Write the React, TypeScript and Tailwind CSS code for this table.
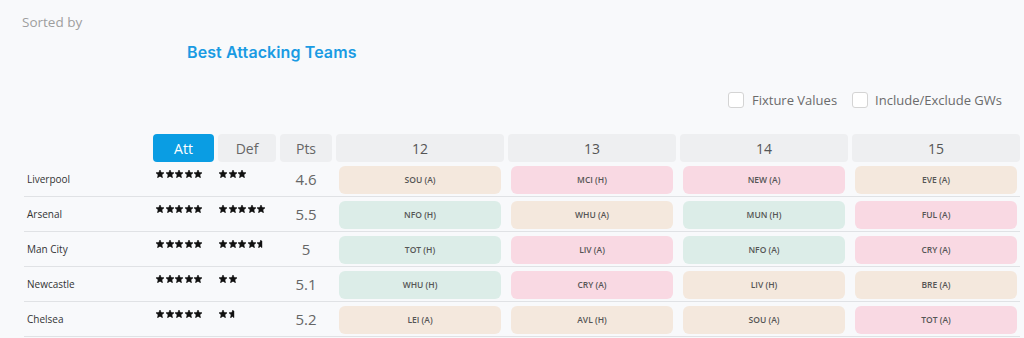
import React from "react";

type Fx = { t: string; c: "b" | "p" | "g" };
type Row = { name: string; att: number; def: number; pts: string; fx: Fx[] };

const rows: Row[] = [
  { name: "Liverpool", att: 5, def: 3, pts: "4.6", fx: [{ t: "SOU (A)", c: "b" }, { t: "MCI (H)", c: "p" }, { t: "NEW (A)", c: "p" }, { t: "EVE (A)", c: "b" }] },
  { name: "Arsenal", att: 5, def: 5, pts: "5.5", fx: [{ t: "NFO (H)", c: "g" }, { t: "WHU (A)", c: "b" }, { t: "MUN (H)", c: "g" }, { t: "FUL (A)", c: "p" }] },
  { name: "Man City", att: 5, def: 4.5, pts: "5", fx: [{ t: "TOT (H)", c: "g" }, { t: "LIV (A)", c: "p" }, { t: "NFO (A)", c: "g" }, { t: "CRY (A)", c: "p" }] },
  { name: "Newcastle", att: 5, def: 2, pts: "5.1", fx: [{ t: "WHU (H)", c: "g" }, { t: "CRY (A)", c: "p" }, { t: "LIV (H)", c: "b" }, { t: "BRE (A)", c: "b" }] },
  { name: "Chelsea", att: 5, def: 1.5, pts: "5.2", fx: [{ t: "LEI (A)", c: "b" }, { t: "AVL (H)", c: "b" }, { t: "SOU (A)", c: "b" }, { t: "TOT (A)", c: "p" }] },
];

const colorCls: Record<string, string> = {
  b: "bg-[#f4e8dd]",
  p: "bg-[#f9d9e3]",
  g: "bg-[#dcede8]",
};

const STAR = "M5 0 L6.4 3.2 L10 3.5 L7.3 5.9 L8.1 9.6 L5 7.7 L1.9 9.6 L2.7 5.9 L0 3.5 L3.6 3.2 Z";
const HALF = "M5 0 L5 7.7 L1.9 9.6 L2.7 5.9 L0 3.5 L3.6 3.2 Z";

function Stars({ n }: { n: number }) {
  const full = Math.floor(n);
  const half = n - full >= 0.5;
  return (
    <div className="flex gap-[1.6px]">
      {Array.from({ length: full }).map((_, i) => (
        <svg key={i} width="8" height="8" viewBox="0 0 10 10">
          <path d={STAR} fill="#111" stroke="#111" strokeWidth="0.8" strokeLinejoin="round" />
        </svg>
      ))}
      {half && (
        <svg width="8" height="8" viewBox="0 0 10 10">
          <path d={HALF} fill="#111" stroke="#111" strokeWidth="0.8" strokeLinejoin="round" />
          <rect x="5" y="1.2" width="1.5" height="8.4" fill="#111" />
        </svg>
      )}
    </div>
  );
}

const grid = "grid grid-cols-[125px_61px_58px_52px_168px_168px_168px_168px] gap-x-1";

export default function App() {
  return (
    <div className="w-[1024px] h-[338px] bg-[#f8f9fb] overflow-hidden" style={{ fontFamily: '"Open Sans", sans-serif' }}>
      <div className="pl-[22px] pt-[13px] text-[13.5px] leading-[18px] text-[#9e9e9e]">Sorted by</div>
      <div className="pl-[187px] pt-[12px] text-[16px] leading-[18px] font-semibold text-[#1a9be3] tracking-[0.1px]" style={{ fontFamily: 'Inter, sans-serif' }}>
        Best Attacking Teams
      </div>
      <div className="flex justify-end pr-[22px] pt-[30px] gap-[15px] text-[13px] leading-[18px] text-[#6b6b6b]">
        <label className="flex items-center gap-[8px]">
          <span className="w-[16px] h-[16px] bg-white border border-[#d4d4d4] rounded-[3px]" />
          Fixture Values
        </label>
        <label className="flex items-center gap-[7px]">
          <span className="w-[16px] h-[16px] bg-white border border-[#d4d4d4] rounded-[3px]" />
          Include/Exclude GWs
        </label>
      </div>

      <div className="pl-[24px] pt-[25px] w-[1020px]">
        <div className={`${grid} h-[28px] text-[14px]`}>
          <div />
          <div className="bg-[#0a9de3] text-white rounded-[4px] flex items-center justify-center">Att</div>
          <div className="bg-[#eeeff1] text-[#666] rounded-[4px] flex items-center justify-center">Def</div>
          <div className="bg-[#eeeff1] text-[#666] rounded-[4px] flex items-center justify-center">Pts</div>
          {["12", "13", "14", "15"].map((g) => (
            <div key={g} className="bg-[#eeeff1] text-[#555] rounded-[4px] flex items-center justify-center">{g}</div>
          ))}
        </div>
        {rows.map((r) => (
          <div key={r.name} className={`${grid} h-[35px] border-b border-[#e0e2e5]`}>
            <div className="flex items-center pl-[3px] text-[10px] text-[#333]">{r.name}</div>
            <div className="pt-[8px] pl-[3px]"><Stars n={r.att} /></div>
            <div className="pt-[8px] pl-[1px]"><Stars n={r.def} /></div>
            <div className="flex items-center justify-center pt-[1px] text-[15px] text-[#666]">{r.pts}</div>
            {r.fx.map((f, i) => (
              <div key={i} className="pt-[4px] pb-[2px] px-[3px]">
                <div className={`${colorCls[f.c]} h-[28px] rounded-[6px] flex items-center justify-center text-[8.5px] font-semibold text-[#555]`}>
                  {f.t}
                </div>
              </div>
            ))}
          </div>
        ))}
      </div>
    </div>
  );
}
